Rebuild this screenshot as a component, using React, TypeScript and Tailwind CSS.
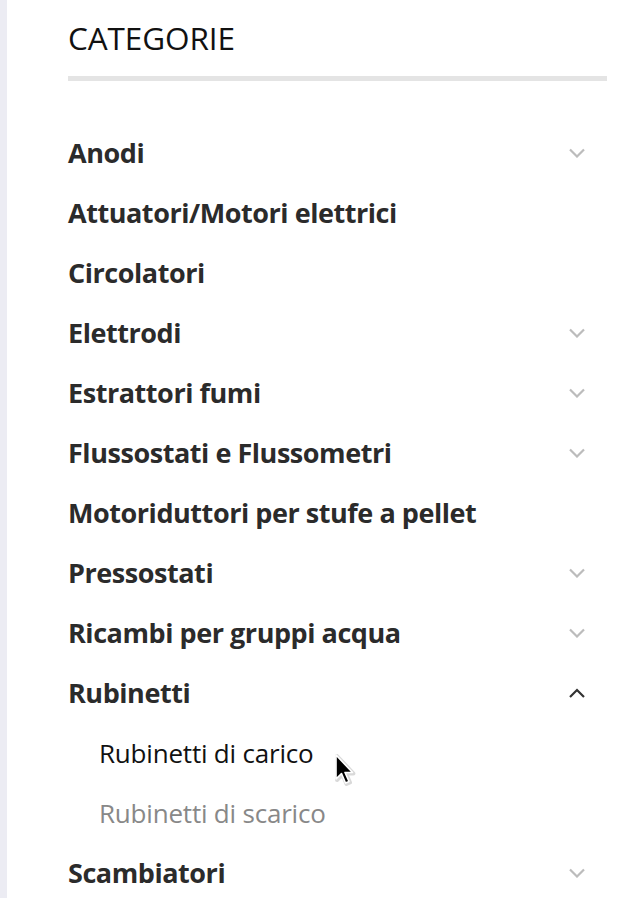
import React from 'react';

type Cat = { name: string; chevron?: 'down' | 'up'; children?: { name: string; active?: boolean }[] };

const categories: Cat[] = [
  { name: 'Anodi', chevron: 'down' },
  { name: 'Attuatori/Motori elettrici' },
  { name: 'Circolatori' },
  { name: 'Elettrodi', chevron: 'down' },
  { name: 'Estrattori fumi', chevron: 'down' },
  { name: 'Flussostati e Flussometri', chevron: 'down' },
  { name: 'Motoriduttori per stufe a pellet' },
  { name: 'Pressostati', chevron: 'down' },
  { name: 'Ricambi per gruppi acqua', chevron: 'down' },
  {
    name: 'Rubinetti',
    chevron: 'up',
    children: [{ name: 'Rubinetti di carico', active: true }, { name: 'Rubinetti di scarico' }],
  },
  { name: 'Scambiatori', chevron: 'down' },
];

function Chevron({ dir }: { dir: 'down' | 'up' }) {
  const up = dir === 'up';
  return (
    <svg width="18" height="10" viewBox="0 0 18 10" className="shrink-0">
      <path
        d={up ? 'M2 9 L9 2 L16 9' : 'M2 1.5 L9 8.5 L16 1.5'}
        fill="none"
        stroke={up ? '#333333' : '#bcbcbc'}
        strokeWidth="2.2"
      />
    </svg>
  );
}

function Cursor() {
  return (
    <svg width="26" height="36" viewBox="0 0 26 36" className="absolute left-[266px] top-[31px]">
      <path
        d="M3 2 L3 26 L8.5 20.5 L12.5 30 L16 28.5 L12 19.5 L19.5 19.5 Z"
        fill="none"
        stroke="#000"
        strokeOpacity="0.15"
        strokeWidth="4"
        strokeLinejoin="round"
      />
      <path
        d="M2 1 L2 25 L7.5 19.5 L11.5 29 L15 27.5 L11 18.5 L18.5 18.5 Z"
        fill="#000"
        stroke="#fff"
        strokeWidth="1.6"
        strokeLinejoin="round"
      />
    </svg>
  );
}

export default function App() {
  return (
    <div className="flex min-h-[898px] bg-white" style={{ fontFamily: '"Open Sans", "Liberation Sans", sans-serif' }}>
      <div className="w-[7px] shrink-0 bg-[#ececf3]" />
      <div className="flex-1 pl-[61px] pr-[14px]">
        <h2 className="pt-[16px] text-[31.5px] leading-[44px] text-[#111] tracking-[-0.1px]">CATEGORIE</h2>
        <div className="mt-[16px] h-[5px] bg-[#e4e4e4]" />
        <ul className="mt-[42px]">
          {categories.map((c) => (
            <li key={c.name}>
              <div className="flex h-[60px] items-center justify-between pr-[21px]">
                <span className="text-[27px] font-bold text-[#2b2b2b] tracking-[-0.45px]">{c.name}</span>
                {c.chevron && <Chevron dir={c.chevron} />}
              </div>
              {c.children && (
                <ul>
                  {c.children.map((s) => (
                    <li key={s.name} className="relative flex h-[60px] items-center pl-[31px]">
                      <span className={`text-[26px] tracking-[-0.2px] ${s.active ? 'text-[#111]' : 'text-[#888]'}`}>
                        {s.name}
                      </span>
                      {s.active && <Cursor />}
                    </li>
                  ))}
                </ul>
              )}
            </li>
          ))}
        </ul>
      </div>
    </div>
  );
}
